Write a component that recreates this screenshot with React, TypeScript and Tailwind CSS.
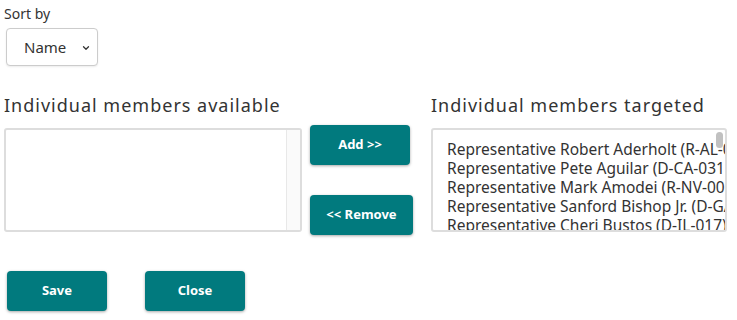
import { ChevronDown } from "lucide-react";

const targeted = [
  "Representative Robert Aderholt (R-AL-004)",
  "Representative Pete Aguilar (D-CA-031)",
  "Representative Mark Amodei (R-NV-002)",
  "Representative Sanford Bishop Jr. (D-GA-002)",
  "Representative Cheri Bustos (D-IL-017)",
  "Representative Ken Calvert (R-CA-042)",
];

const btn =
  "h-10 rounded-[4px] bg-[#017a7e] text-[13px] font-bold text-white shadow-[0_1px_3px_rgba(0,0,0,0.35)]";

export default function App() {
  return (
    <div className="relative h-[320px] w-[737px] bg-white font-['Noto_Sans',sans-serif] text-[#333]">
      <div className="pl-1 pt-[5px]">
        <label className="block text-[14px] leading-[18px]">Sort by</label>
        <div className="relative ml-[2px] mt-[5px] h-[38px] w-[92px]">
          <select className="h-full w-full appearance-none rounded-[4px] border border-[#ccc] bg-white pl-[17px] text-[15px] text-[#333] shadow-[0_1px_2px_rgba(0,0,0,0.08)] outline-none">
            <option>Name</option>
          </select>
          <ChevronDown className="pointer-events-none absolute right-[7px] top-[15px] h-[10px] w-[10px]" strokeWidth={3} />
        </div>
      </div>

      <div className="mt-[27px] flex pl-1">
        <div className="w-[298px]">
          <h2 className="text-[18px] leading-[24px] tracking-[1px]">Individual members available</h2>
          <div className="mt-[11px] flex h-[104px] rounded-[3px] border-2 border-[#ddd] bg-white">
            <div className="flex-1" />
            <div className="w-[14px] border-l border-[#e8e8e8] bg-[#fafafa]" />
          </div>
        </div>

        <div className="ml-[8px] flex flex-col gap-[30px] pt-[32px]">
          <button className={`${btn} w-[100px]`}>Add &gt;&gt;</button>
          <button className={`${btn} w-[103px]`}>&lt;&lt; Remove</button>
        </div>

        <div className="ml-[18px] w-[296px]">
          <h2 className="text-[18px] leading-[24px] tracking-[1px]">Individual members targeted</h2>
          <div className="relative mt-[11px] h-[104px] overflow-hidden rounded-[3px] border-2 border-[#ddd] bg-white">
            <ul className="pl-[14px] pt-[10px] text-[15.5px] leading-[19px]">
              {targeted.map((t) => (
                <li key={t} className="overflow-hidden whitespace-nowrap">
                  {t}
                </li>
              ))}
            </ul>
            <div className="absolute right-[2px] top-[2px] h-[16px] w-[7px] rounded-full bg-[#c1c1c1]" />
          </div>
        </div>
      </div>

      <div className="mt-[36px] flex gap-[38px] pl-[7px]">
        <button className={`${btn} w-[100px]`}>Save</button>
        <button className={`${btn} w-[100px]`}>Close</button>
      </div>
    </div>
  );
}
